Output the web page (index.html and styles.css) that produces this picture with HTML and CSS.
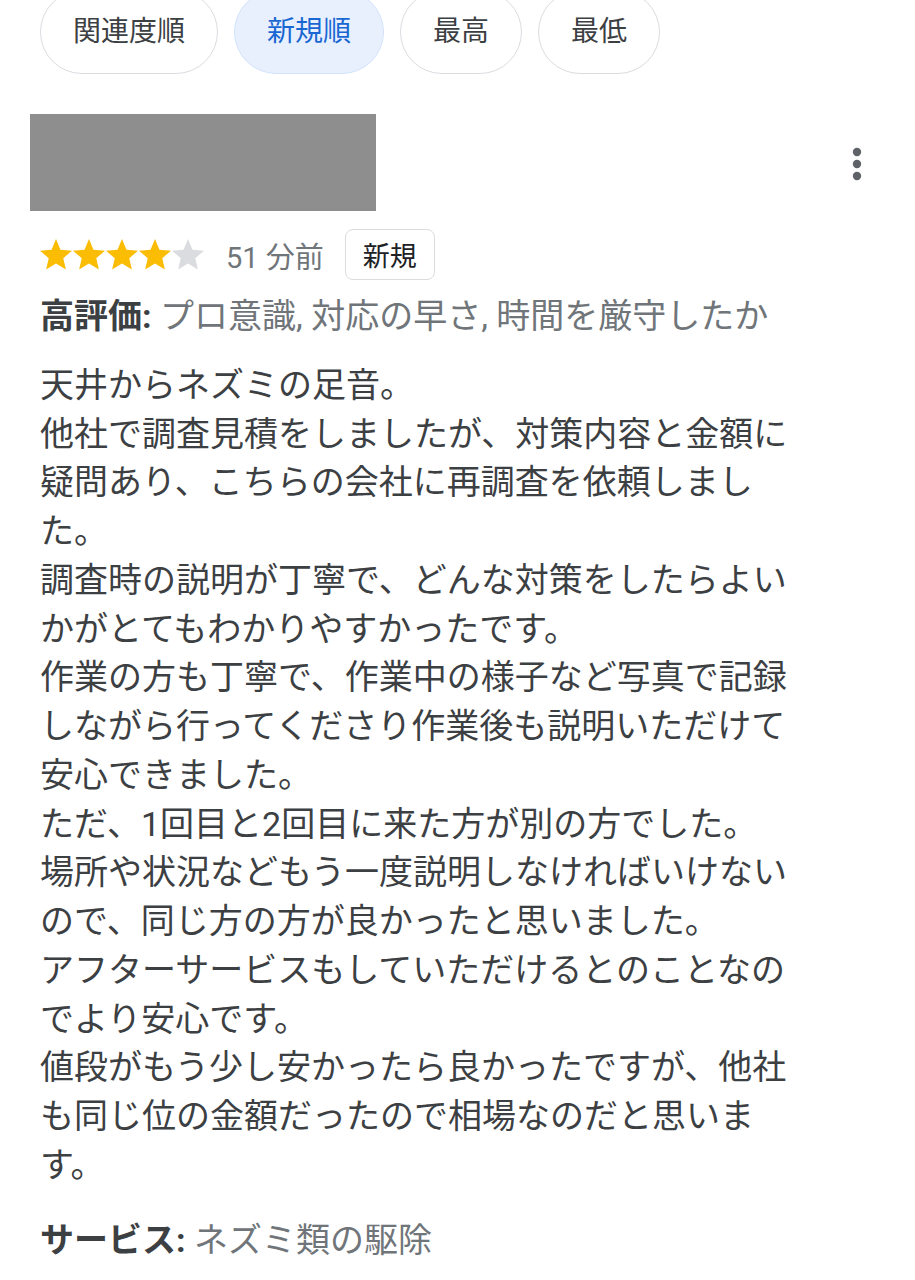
FILE: index.html
```html
<!DOCTYPE html>
<html lang="ja">
<head>
<meta charset="utf-8">
<link rel="stylesheet" href="styles.css">
</head>
<body>
<div class="page">
  <div class="chips">
    <div class="chip">関連度順</div>
    <div class="chip active">新規順</div>
    <div class="chip">最高</div>
    <div class="chip">最低</div>
  </div>
  <div class="header">
    <div class="redact"></div>
    <svg class="kebab" width="24" height="40" viewBox="0 0 24 40">
      <circle cx="12" cy="8" r="4.2" fill="#5f6368"/>
      <circle cx="12" cy="20" r="4.2" fill="#5f6368"/>
      <circle cx="12" cy="32" r="4.2" fill="#5f6368"/>
    </svg>
  </div>
  <div class="rating">
    <div class="stars">
      <svg class="star" viewBox="2 2 20 19.3"><path class="on" d="M12 17.27L18.18 21l-1.64-7.03L22 9.24l-7.19-.61L12 2 9.19 8.63 2 9.24l5.46 4.730L5.82 21z"/></svg>
      <svg class="star" viewBox="2 2 20 19.3"><path class="on" d="M12 17.27L18.18 21l-1.64-7.03L22 9.24l-7.19-.61L12 2 9.19 8.63 2 9.24l5.46 4.73L5.82 21z"/></svg>
      <svg class="star" viewBox="2 2 20 19.3"><path class="on" d="M12 17.27L18.18 21l-1.64-7.03L22 9.24l-7.19-.61L12 2 9.19 8.63 2 9.24l5.46 4.73L5.82 21z"/></svg>
      <svg class="star" viewBox="2 2 20 19.3"><path class="on" d="M12 17.27L18.18 21l-1.64-7.03L22 9.24l-7.19-.61L12 2 9.19 8.63 2 9.24l5.46 4.73L5.82 21z"/></svg>
      <svg class="star" viewBox="2 2 20 19.3"><path class="off" d="M12 17.27L18.18 21l-1.64-7.03L22 9.24l-7.19-.61L12 2 9.19 8.63 2 9.24l5.46 4.73L5.82 21z"/></svg>
    </div>
    <span class="time">51 分前</span>
    <span class="badge">新規</span>
  </div>
  <div class="tags"><b class="label">高評価:</b> <span class="val">プロ意識, 対応の早さ, 時間を厳守したか</span></div>
  <div class="body">天井からネズミの足音。
他社で調査見積をしましたが、対策内容と金額に疑問あり、こちらの会社に再調査を依頼しました。
調査時の説明が丁寧で、どんな対策をしたらよいかがとてもわかりやすかったです。
作業の方も丁寧で、作業中の様子など写真で記録しながら行ってくださり作業後も説明いただけて安心できました。
ただ、1回目と2回目に来た方が別の方でした。
場所や状況などもう一度説明しなければいけないので、同じ方の方が良かったと思いました。
アフターサービスもしていただけるとのことなのでより安心です。
値段がもう少し安かったら良かったですが、他社も同じ位の金額だったので相場なのだと思います。</div>
  <div class="tags service"><b class="label">サービス:</b> <span class="val">ネズミ類の駆除</span></div>
</div>
</body>
</html>
```

FILE: styles.css
```css
html, body {
  margin: 0;
  padding: 0;
  background: #ffffff;
}
body {
  font-family: Roboto, "Noto Sans CJK JP", sans-serif;
  color: #3c4043;
  width: 915px;
  height: 1280px;
  overflow: hidden;
}
.page {
  padding: 0 40px;
}
.chips {
  display: flex;
  gap: 16px;
  margin-top: -10px;
}
.chip {
  height: 84px;
  box-sizing: border-box;
  border: 1.5px solid #dadce0;
  border-radius: 42px;
  padding: 0 32px 6px;
  display: flex;
  align-items: center;
  font-size: 28px;
  color: #3c4043;
  background: #fff;
}
.chip.active {
  background: #e8f0fe;
  border-color: #d2e3fc;
  color: #1967d2;
}
.header {
  margin-top: 40px;
  margin-left: -10px;
  display: flex;
  justify-content: space-between;
  align-items: center;
}
.redact {
  width: 346px;
  height: 97px;
  background: #8e8e8e;
}
.kebab {
  margin-right: 6px;
  margin-top: 3px;
}
.rating {
  margin-top: 18px;
  display: flex;
  align-items: center;
  height: 51px;
}
.stars {
  display: flex;
  gap: 1px;
}
.star {
  width: 32px;
  height: 31px;
}
.star .on { fill: #fbbc04; }
.star .off { fill: #dadce0; }
.time {
  margin-left: 22px;
  font-size: 29px;
  color: #70757a;
}
.badge {
  margin-left: 21px;
  height: 51px;
  box-sizing: border-box;
  border: 1.5px solid #dadce0;
  border-radius: 8px;
  padding: 0 17px;
  display: flex;
  align-items: center;
  font-size: 27px;
  color: #202124;
}
.tags {
  margin-top: 12px;
  font-size: 34px;
  line-height: 48.75px;
  white-space: nowrap;
}
.tags .label {
  font-weight: 700;
  color: #3c4043;
}
.tags .val {
  color: #70757a;
}
.body {
  margin-top: 20px;
  width: 760px;
  font-size: 34px;
  line-height: 48.75px;
  white-space: pre-line;
  color: #3c4043;
}
.service {
  margin-top: 26px;
}
```
